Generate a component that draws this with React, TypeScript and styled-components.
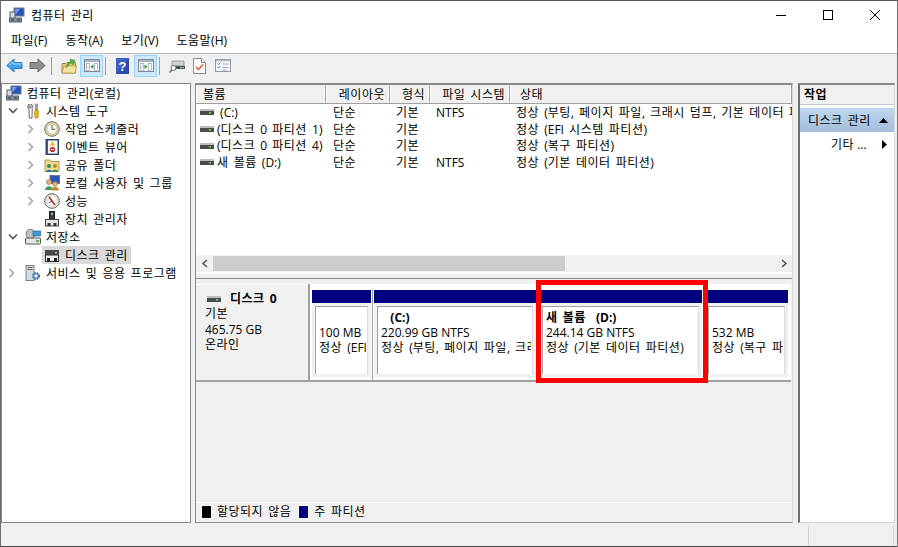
import React from "react";
import styled, { createGlobalStyle } from "styled-components";

const Global = createGlobalStyle`
  html, body { margin: 0; padding: 0; background: #fff; }
  body { font-family: "Open Sans", "Noto Sans CJK KR", sans-serif; font-size: 12px; color: #000; }
  * { box-sizing: border-box; }
`;

const KoRun = styled.span`
  display: inline-block; line-height: 15px; letter-spacing: .5px; word-spacing: 1.5px; white-space: pre;
`;
const K = ({ t }: { t: string }) => {
  if (!/[\uAC00-\uD7A3]/.test(t)) return <>{t}</>;
  return (
    <>
      {t.split(/([\uAC00-\uD7A3 ]+)/).filter(Boolean).map((s, i) =>
        /[\uAC00-\uD7A3 ]/.test(s[0]) ? <KoRun key={i}>{s}</KoRun> : <React.Fragment key={i}>{s}</React.Fragment>
      )}
    </>
  );
};

const Win = styled.div`
  width: 898px; height: 547px; display: flex; flex-direction: column; background: #f0f0f0;
  border-top: 1px solid #5a5a5a; border-left: 1px solid #6e6e6e; border-right: 1px solid #6e6e6e;
  overflow: hidden; position: relative;
`;
const TitleBar = styled.div`
  height: 28px; background: #fff; display: flex; align-items: center; padding-left: 8px; flex: none;
`;
const TitleText = styled.div`
  margin-left: 6px; flex: 1; color: #000;
`;
const WinBtn = styled.div`
  width: 47px; height: 28px; display: flex; align-items: center; justify-content: center; position: relative; left: 1px;
`;
const MenuBar = styled.div`
  height: 25px; background: #fff; display: flex; align-items: center; padding: 0 0 1px 1px; flex: none;
  border-bottom: 1px solid #b9b9c4;
`;
const MenuItem = styled.div`
  padding: 0 9px; white-space: nowrap; display: flex; align-items: center;
`;
const Toolbar = styled.div`
  height: 25px; background: #f0f0f0; display: flex; align-items: center; padding: 0 0 2px 2px; flex: none;
`;
const ToolBtn = styled.div<{ $active?: boolean }>`
  width: 23px; height: 22px; display: flex; align-items: center; justify-content: center; flex: none;
  ${p => p.$active ? "background:#cce8ff;border:1px solid #99d1ff;" : ""}
`;
const Sep = styled.div`
  width: 1px; height: 18px; background: #a0a0a0; margin: 0 5px 0 2px; flex: none;
`;
const Main = styled.div`
  flex: 1; display: flex; min-height: 0; padding: 4px 0 0 0; background: #f0f0f0;
`;
const TreePane = styled.div`
  width: 190px; background: #fff; border: 1px solid #858585; flex: none;
`;
const TreeRow = styled.div<{ $depth: number; $plain?: boolean }>`
  height: 18px; display: flex; align-items: center; padding-left: ${p => p.$plain ? 4 : 2 + p.$depth * 19}px; white-space: nowrap;
`;
const Caret = styled.div`
  width: 21px; flex: none; display: flex; align-items: center; padding-left: 4px;
`;
const TreeIcon = styled.div`
  width: 16px; height: 16px; flex: none; display: flex; margin-right: 5px;
`;
const Selected = styled.div`
  display: flex; align-items: center; height: 18px; background: #d9d9d9; margin-left: -2px; padding: 0 3px 0 2px;
`;
const CenterPane = styled.div`
  width: 598px; margin-left: 4px; flex: none; display: flex; flex-direction: column;
  border-style: solid; border-color: #8a8a8a #d8d8d8 #8a8a8a #8a8a8a; border-width: 2px 1px 1px 1px;
`;
const HeaderRow = styled.div`
  height: 19px; display: flex; background: #f0f0f0; border-bottom: 1px solid #a0a0a0; flex: none;
`;
const HeaderCell = styled.div<{ $w?: number; $right?: boolean }>`
  ${p => p.$w ? `width:${p.$w}px;flex:none;` : "flex:1;"}
  padding: ${p => p.$right ? "0 4px 0 0" : "0 0 0 7px"}; display: flex; align-items: center; white-space: nowrap;
  justify-content: ${p => p.$right ? "flex-end" : "flex-start"};
  border-right: 1px solid #a0a0a0; box-shadow: inset -1px 0 #fff, inset 1px 0 #fff; overflow: hidden;
`;
const StatusHead = styled(HeaderCell)`
  padding-left: 10px;
`;
const ListBody = styled.div`
  background: #fff; height: 151px; flex: none; overflow: hidden;
`;
const ListRow = styled.div`
  display: flex; height: 16.7px; align-items: center; white-space: nowrap;
`;
const Cell = styled.div<{ $w: number; $pad?: number }>`
  width: ${p => p.$w}px; flex: none; padding-left: ${p => p.$pad ?? 0}px; display: flex; align-items: center; overflow: hidden; white-space: pre;
`;
const RowName = styled.span`
  margin-left: 3px;
`;
const ScrollBar = styled.div`
  height: 17px; background: #f0f0f0; display: flex; align-items: center; flex: none;
`;
const ScrollArrow = styled.div`
  width: 17px; height: 17px; display: flex; align-items: center; justify-content: center; flex: none;
`;
const Track = styled.div`
  flex: 1; height: 15px; background: #f0f0f0; display: flex;
`;
const Thumb = styled.div`
  width: 352px; background: #cdcdcd; height: 15px;
`;
const Split = styled.div`
  height: 7px; flex: none; background: #f0f0f0; border-bottom: 1px solid #8a8a8a; box-shadow: inset 0 2px #fff;
`;
const GraphArea = styled.div`
  flex: 1; background: #f0f0f0; display: flex; flex-direction: column; min-height: 0;
`;
const DiskRow = styled.div`
  display: flex; height: 98px; flex: none; margin-top: 5px;
`;
const DiskInfo = styled.div`
  width: 114px; height: 98px; flex: none; background: #f0f0f0; border-right: 2px solid #a0a0a0; border-bottom: 2px solid #a0a0a0;
  padding: 8px 0 0 9px; line-height: 15.5px; box-shadow: inset 0 1px #fff;
`;
const DiskTitle = styled.div`
  display: flex; align-items: center; font-weight: 700; gap: 9px; margin-left: 2px; height: 14px;
`;
const Parts = styled.div`
  width: 481px; flex: none; display: flex; background: #fff; padding: 6px 0 0 2px; height: 98px; border-bottom: 2px solid #a0a0a0;
`;
const Part = styled.div<{ $w: number }>`
  width: ${p => p.$w}px; flex: none; display: flex; flex-direction: column; border-left: 1px solid #a0a0a0; padding-left: 1px; margin-left: 1px;
  &:first-child { border-left: 0; padding-left: 0; margin-left: 0; }
`;
const PartHead = styled.div`
  height: 13px; background: #000080; flex: none;
`;
const PartBody = styled.div`
  height: 74px; background: #f0f0f0; padding: 3px; flex: none;
`;
const PartInner = styled.div`
  height: 68px; background: #fff; border-style: solid; border-color: #a0a0a0 #dcdcdc #dcdcdc #a0a0a0; border-width: 1px 1px 0 1px; padding: 3px 1px 0 3px;
`;
const PartText = styled.div`
  line-height: 15px; height: 60px; overflow: hidden; white-space: pre;
`;
const Bold = styled.div`
  font-weight: 700;
`;
const Empty = styled.div`
  flex: 1; background: #f0f0f0;
`;
const Legend = styled.div`
  height: 20px; flex: none; background: #f0f0f0; border-top: 1px solid #fff; display: flex; align-items: center; padding: 0 0 2px 5px; gap: 5px;
`;
const Swatch = styled.div<{ $c: string }>`
  width: 11px; height: 14px; background: ${p => p.$c}; border: 1px solid #fff;
`;
const LegendText = styled.span`
  margin-right: 2px; display: flex; align-items: center;
`;
const ActionPane = styled.div`
  width: 97px; margin-left: 5px; flex: none; background: #fff; border-style: solid; border-color: #8a8a8a #d8d8d8 #d8d8d8 #6e6e6e; border-width: 2px 1px 1px 2px;
`;
const ActionHead = styled.div`
  height: 20px; display: flex; align-items: center; padding-left: 4px; background: #f0f0f0; font-weight: 700; border-bottom: 1px solid #c8c8c8; margin-bottom: 3px;
`;
const ActionSel = styled.div`
  height: 24px; background: linear-gradient(#bfd7ee, #a3bdda); display: flex; align-items: center; padding: 0 6px 0 8px; justify-content: space-between;
`;
const ActionItem = styled.div`
  height: 24px; display: flex; align-items: center; justify-content: space-between; padding: 0 7px 0 31px;
`;
const StatusBar = styled.div`
  height: 24px; flex: none; background: #f0f0f0; border-bottom: 1px solid #4a4a4a; display: flex; padding-top: 3px;
`;
const StatusCell = styled.div<{ $w: number }>`
  width: ${p => p.$w}px; flex: none; border-right: 1px solid #d0d0d0;
`;
const Highlight = styled.div`
  position: absolute; left: 535px; top: 279px; width: 172px; height: 103px; border: 5px solid #ff0000; pointer-events: none;
`;

const PcIcon = () => (
  <svg width="16" height="16" viewBox="0 0 16 16">
    <rect x="5" y="1" width="10" height="8" fill="#2b55b8" stroke="#6c7690" />
    <path d="M6 2h5l-4 5H6z" fill="#6f9ae8" />
    <rect x="1" y="5" width="5" height="7" fill="#d8dde4" stroke="#55606c" />
    <rect x="0.5" y="11" width="12" height="4" fill="#8a929c" stroke="#55606c" />
    <rect x="2" y="12.5" width="3" height="1" fill="#2a2f38" /><rect x="8" y="12.5" width="3" height="1" fill="#2a2f38" />
  </svg>
);
const ToolsIcon = () => (
  <svg width="16" height="16" viewBox="0 0 16 16">
    <path d="M4 1v3.5L6 5V1.2C8 2 8.5 4 7.2 5.6L7 15H4.2L4 6C2.4 5 2.6 2 4 1z" fill="#fff" stroke="#555" strokeWidth=".9" />
    <rect x="10.5" y="1" width="2.2" height="6" fill="#aaa" stroke="#666" strokeWidth=".5" />
    <path d="M10 7h3l.5 3-.5 5h-3l-.5-5z" fill="#f2b800" stroke="#a57a00" strokeWidth=".6" />
  </svg>
);
const ClockIcon = () => (
  <svg width="16" height="16" viewBox="0 0 16 16">
    <circle cx="8" cy="8" r="7.3" fill="#e8d9a8" stroke="#6b6b5e" />
    <circle cx="8" cy="8" r="5.2" fill="#fbfaf2" stroke="#a89b6e" strokeWidth=".6" />
    <path d="M8 4v4.3h3.3" fill="none" stroke="#555" strokeWidth="1" />
  </svg>
);
const EventIcon = () => (
  <svg width="16" height="16" viewBox="0 0 16 16">
    <rect x="2" y="0.5" width="12.5" height="15" fill="#3c5a90" stroke="#26406e" />
    <rect x="4" y="1.5" width="9.5" height="13" fill="#f7f7f0" />
    <path d="M8.5 2.5l2.5 4H6z" fill="#f0b400" />
    <circle cx="8.5" cy="10.5" r="2.6" fill="#c8202a" />
    <rect x="7" y="10" width="3" height="1" fill="#fff" />
  </svg>
);
const ShareIcon = () => (
  <svg width="16" height="16" viewBox="0 0 16 16">
    <path d="M1 3h5l1 1.5h8v10H1z" fill="#f0d78c" stroke="#b09a50" />
    <circle cx="5" cy="9" r="2" fill="#2f8a48" /><path d="M2 15c0-3 6-3 6 0z" fill="#2f6fa8" />
    <circle cx="11" cy="9" r="2" fill="#b8862a" /><path d="M8 15c0-3 6-3 6 0z" fill="#3a8a4a" />
  </svg>
);
const UsersIcon = () => (
  <svg width="16" height="16" viewBox="0 0 16 16">
    <rect x="6" y="0.5" width="9.5" height="8" fill="#2b55b8" stroke="#6c7690" />
    <circle cx="5" cy="7" r="2.6" fill="#e0b080" stroke="#8a6a3a" strokeWidth=".5" />
    <path d="M1 15c0-5 8-5 8 0z" fill="#3f9a5a" />
    <circle cx="11" cy="9" r="2.4" fill="#e0b080" stroke="#8a6a3a" strokeWidth=".5" />
    <path d="M7 15.5c0-5 8-5 8 0z" fill="#c88a30" />
  </svg>
);
const PerfIcon = () => (
  <svg width="16" height="16" viewBox="0 0 16 16">
    <circle cx="8" cy="8" r="7.3" fill="#f1efe6" stroke="#5f5f5f" />
    <circle cx="8" cy="8" r="5.2" fill="#fff" stroke="#bbb" strokeWidth=".6" />
    <path d="M5 4l6 8" stroke="#d02020" strokeWidth="1.6" />
    <path d="M5 10l3-2" stroke="#444" strokeWidth="1" />
  </svg>
);
const DevIcon = () => (
  <svg width="16" height="16" viewBox="0 0 16 16">
    <rect x="5.5" y="0.5" width="5" height="8" fill="#3c3c3c" stroke="#222" />
    <rect x="7" y="2" width="2" height="2" fill="#7fd07f" />
    <rect x="1.5" y="8.5" width="13" height="6.5" fill="#e4e4e4" stroke="#444" />
    <rect x="3.5" y="12" width="3" height="3" fill="#333" /><rect x="9.5" y="12" width="3" height="3" fill="#333" />
  </svg>
);
const StorageIcon = () => (
  <svg width="16" height="16" viewBox="0 0 16 16">
    <circle cx="5.5" cy="5" r="4.5" fill="#c4c8cc" stroke="#777" />
    <circle cx="5.5" cy="5" r="1.3" fill="#fff" stroke="#777" strokeWidth=".5" />
    <rect x="8" y="2" width="7.5" height="5" fill="#3b9ad8" stroke="#24638e" strokeWidth=".7" />
    <rect x="0.5" y="9" width="15" height="6" rx="1" fill="#e4e6e4" stroke="#555" />
    <rect x="11" y="11" width="3" height="2" fill="#5bb04a" />
  </svg>
);
const DiskIcon = () => (
  <svg width="16" height="16" viewBox="0 0 16 16">
    <rect x="1" y="3" width="14" height="5" fill="#4a4a4a" />
    <rect x="1.5" y="8" width="13" height="6.5" fill="#ececec" stroke="#333" />
    <rect x="3" y="11" width="3" height="4" fill="#222" /><rect x="10" y="11" width="3" height="4" fill="#222" />
    <rect x="11" y="5" width="2" height="1.5" fill="#70e070" />
  </svg>
);
const ServiceIcon = () => (
  <svg width="16" height="16" viewBox="0 0 16 16">
    <rect x="1" y="0.5" width="8" height="15" fill="#d6dbe0" stroke="#7a8088" />
    <rect x="2.5" y="2" width="5" height="1" fill="#666" /><rect x="2.5" y="4" width="5" height="1" fill="#666" />
    <circle cx="11" cy="11" r="3.2" fill="#7fa8d4" stroke="#3a6a9e" strokeWidth="1.6" strokeDasharray="1.6 1" />
    <circle cx="11" cy="11" r="1.2" fill="#fff" />
  </svg>
);
const SmallDisk = () => (
  <svg width="14" height="6" viewBox="0 0 14 6">
    <rect x="0" y="0" width="14" height="2" fill="#bdbdbd" />
    <rect x="0" y="2" width="14" height="4" fill="#4b4b4b" />
    <rect x="9" y="3" width="2" height="1.5" fill="#5fe05f" />
  </svg>
);
const ChevDown = () => (
  <svg width="10" height="8" viewBox="0 0 10 8"><path d="M1 1.5l4 4 4-4" fill="none" stroke="#555" strokeWidth="1.6" /></svg>
);
const ChevRight = () => (
  <svg width="8" height="10" viewBox="0 0 8 10"><path d="M1.5 1l4 4-4 4" fill="none" stroke="#a6a6a6" strokeWidth="1.6" /></svg>
);
const ArrowBack = () => (
  <svg width="17" height="15" viewBox="0 0 17 15">
    <path d="M.8 7.5L8 1v3.5h8v6H8V14z" fill="#3ea0ea" stroke="#2b7cc0" />
    <path d="M3 7.5L7 4v2h8v-1" fill="none" stroke="#a8dcff" />
  </svg>
);
const ArrowFwd = () => (
  <svg width="17" height="15" viewBox="0 0 17 15"><path d="M16.2 7.5L9 1v3.5H1v6h8V14z" fill="#8e8e8e" stroke="#6a6a6a" /></svg>
);
const FolderUp = () => (
  <svg width="16" height="16" viewBox="0 0 16 16">
    <path d="M1 5.5h4l1-1h8.5V15H1z" fill="#f0d27a" stroke="#a68d3e" />
    <path d="M1 15L3 8h12.5L14.5 15z" fill="#f7e29e" stroke="#a68d3e" strokeWidth=".7" />
    <path d="M5 10C6 5 8 3.5 10 3L9 1l5 1.5-2 4.5-1-2C9 5.5 7 7 5 10z" fill="#4fb04f" stroke="#2f7f2f" strokeWidth=".5" />
  </svg>
);
const PaneIcon = ({ arrow }: { arrow: "left" | "right" }) => (
  <svg width="16" height="13" viewBox="0 0 16 13">
    <rect x="0.5" y="0.5" width="15" height="12" fill="#f4f6f8" stroke="#7d8894" />
    <rect x="1" y="1" width="14" height="2" fill="#a9b4c0" />
    <rect x="2.5" y="4.5" width="3" height="7" fill="#fff" stroke="#8d98a4" strokeWidth=".6" />
    <path d="M2.5 8h3M10.5 8h3" stroke="#8d98a4" strokeWidth=".6" />
    <rect x="10.5" y="4.5" width="3" height="7" fill="#fff" stroke="#8d98a4" strokeWidth=".6" />
    <path d={arrow === "left" ? "M9.5 5.5v4.5L6.5 7.7z" : "M6.5 5.5v4.5l3-2.3z"} fill="#2f9a3f" />
  </svg>
);
const HelpIcon = () => (
  <svg width="13" height="16" viewBox="0 0 13 16">
    <rect width="13" height="16" fill="#2a4bb0" />
    <path d="M0 0h13L0 16z" fill="#4a6ccc" opacity=".7" />
    <text x="6.5" y="13" textAnchor="middle" fontSize="13" fontWeight="700" fill="#fff" fontFamily="Liberation Sans">?</text>
  </svg>
);
const ScopeIcon = () => (
  <svg width="16" height="14" viewBox="0 0 16 14">
    <path d="M3 2h12v5H3z" fill="#cdd3d8" stroke="#7c858e" strokeWidth=".7" />
    <rect x="3" y="7" width="13" height="3" fill="#4c4f52" />
    <rect x="11" y="8" width="2" height="1.2" fill="#6fe06f" /><rect x="13.5" y="8" width="1.5" height="1.2" fill="#6fe06f" />
    <circle cx="4.5" cy="9" r="2.5" fill="#fff" stroke="#666" />
    <path d="M3 11l-2.5 2.5" stroke="#777" strokeWidth="1.6" />
  </svg>
);
const CheckDoc = () => (
  <svg width="13" height="16" viewBox="0 0 13 16">
    <path d="M.5.5h8l4 4v11H.5z" fill="#fff" stroke="#8a8a8a" />
    <path d="M8.5.5v4h4" fill="#eee" stroke="#8a8a8a" />
    <path d="M3 9l2.5 2.5L10 6.5" fill="none" stroke="#e2582a" strokeWidth="1.5" />
  </svg>
);
const ListIcon = () => (
  <svg width="16" height="13" viewBox="0 0 16 13">
    <rect x=".5" y=".5" width="15" height="12" fill="#fff" stroke="#8d9aa6" />
    <rect x="1" y="1" width="14" height="1.6" fill="#b9c3cd" />
    <path d="M2.5 4.5l1 1 2-2M2.5 8l1 1 2-2" fill="none" stroke="#2f76c8" strokeWidth="1" />
    <path d="M7 5h7M7 8.5h7M7 11h5" stroke="#9aa3ad" strokeWidth="1" />
  </svg>
);

const tree: { d: number; c?: "d" | "r"; i: React.ReactNode; t: string; sel?: boolean }[] = [
  { d: 0, i: <PcIcon />, t: "컴퓨터 관리(로컬)" },
  { d: 0, c: "d", i: <ToolsIcon />, t: "시스템 도구" },
  { d: 1, c: "r", i: <ClockIcon />, t: "작업 스케줄러" },
  { d: 1, c: "r", i: <EventIcon />, t: "이벤트 뷰어" },
  { d: 1, c: "r", i: <ShareIcon />, t: "공유 폴더" },
  { d: 1, c: "r", i: <UsersIcon />, t: "로컬 사용자 및 그룹" },
  { d: 1, c: "r", i: <PerfIcon />, t: "성능" },
  { d: 1, i: <DevIcon />, t: "장치 관리자" },
  { d: 0, c: "d", i: <StorageIcon />, t: "저장소" },
  { d: 1, i: <DiskIcon />, t: "디스크 관리", sel: true },
  { d: 0, c: "r", i: <ServiceIcon />, t: "서비스 및 응용 프로그램" },
];

const rows = [
  [" (C:)", "단순", "기본", "NTFS", "정상 (부팅, 페이지 파일, 크래시 덤프, 기본 데이터 파티션)"],
  ["(디스크 0 파티션 1)", "단순", "기본", "", "정상 (EFI 시스템 파티션)"],
  ["(디스크 0 파티션 4)", "단순", "기본", "", "정상 (복구 파티션)"],
  ["새 볼륨 (D:)", "단순", "기본", "NTFS", "정상 (기본 데이터 파티션)"],
];

export default function App() {
  return (
    <Win>
      <Global />
      <TitleBar>
        <PcIcon />
        <TitleText><K t="컴퓨터 관리" /></TitleText>
        <WinBtn><svg width="10" height="10" viewBox="0 0 10 10"><path d="M0 5.5h10" stroke="#000" /></svg></WinBtn>
        <WinBtn><svg width="10" height="10" viewBox="0 0 10 10"><rect x=".5" y=".5" width="9" height="9" fill="none" stroke="#000" /></svg></WinBtn>
        <WinBtn><svg width="10" height="10" viewBox="0 0 10 10"><path d="M0 0l10 10M10 0L0 10" stroke="#000" /></svg></WinBtn>
      </TitleBar>
      <MenuBar>
        <MenuItem><K t="파일(F)" /></MenuItem><MenuItem><K t="동작(A)" /></MenuItem><MenuItem><K t="보기(V)" /></MenuItem><MenuItem><K t="도움말(H)" /></MenuItem>
      </MenuBar>
      <Toolbar>
        <ToolBtn><ArrowBack /></ToolBtn>
        <ToolBtn><ArrowFwd /></ToolBtn>
        <Sep />
        <ToolBtn><FolderUp /></ToolBtn>
        <ToolBtn $active><PaneIcon arrow="left" /></ToolBtn>
        <Sep />
        <ToolBtn><HelpIcon /></ToolBtn>
        <ToolBtn $active><PaneIcon arrow="right" /></ToolBtn>
        <Sep />
        <ToolBtn><ScopeIcon /></ToolBtn>
        <ToolBtn><CheckDoc /></ToolBtn>
        <ToolBtn><ListIcon /></ToolBtn>
      </Toolbar>
      <Main>
        <TreePane>
          {tree.map(r => (
            <TreeRow key={r.t} $depth={r.d} $plain={!r.c && r.d === 0}>
              {r.c || r.d === 1 ? <Caret>{r.c === "d" ? <ChevDown /> : r.c === "r" ? <ChevRight /> : null}</Caret> : null}
              {r.sel ? (
                <Selected><TreeIcon>{r.i}</TreeIcon><K t={r.t} /></Selected>
              ) : (
                <><TreeIcon>{r.i}</TreeIcon><K t={r.t} /></>
              )}
            </TreeRow>
          ))}
        </TreePane>
        <CenterPane>
          <HeaderRow>
            <HeaderCell $w={130}><K t="볼륨" /></HeaderCell>
            <HeaderCell $w={64} $right><K t="레이아웃" /></HeaderCell>
            <HeaderCell $w={40} $right><K t="형식" /></HeaderCell>
            <HeaderCell $w={80} $right><K t="파일 시스템" /></HeaderCell>
            <StatusHead><K t="상태" /></StatusHead>
          </HeaderRow>
          <ListBody>
            {rows.map(r => (
              <ListRow key={r[0]}>
                <Cell $w={137} $pad={4}><SmallDisk /><RowName><K t={r[0]} /></RowName></Cell>
                <Cell $w={63}><K t={r[1]} /></Cell>
                <Cell $w={40}><K t={r[2]} /></Cell>
                <Cell $w={80}>{r[3]}</Cell>
                <Cell $w={276}><K t={r[4]} /></Cell>
              </ListRow>
            ))}
          </ListBody>
          <ScrollBar>
            <ScrollArrow><svg width="8" height="9" viewBox="0 0 8 9"><path d="M6 1L2 4.5 6 8" fill="none" stroke="#555" strokeWidth="1.6" /></svg></ScrollArrow>
            <Track><Thumb /></Track>
            <ScrollArrow><svg width="8" height="9" viewBox="0 0 8 9"><path d="M2 1l4 3.5L2 8" fill="none" stroke="#555" strokeWidth="1.6" /></svg></ScrollArrow>
          </ScrollBar>
          <Split />
          <GraphArea>
            <DiskRow>
              <DiskInfo>
                <DiskTitle><SmallDisk /><span><K t="디스크 0" /></span></DiskTitle>
                <div><K t="기본" /></div>
                <div>465.75 GB</div>
                <div><K t="온라인" /></div>
              </DiskInfo>
              <Parts>
                <Part $w={59}>
                  <PartHead />
                  <PartBody><PartInner><PartText>{"\n"}100 MB{"\n"}<K t="정상 (EFI" /></PartText></PartInner></PartBody>
                </Part>
                <Part $w={164}>
                  <PartHead />
                  <PartBody><PartInner><PartText><Bold>   (C:)</Bold>220.99 GB NTFS{"\n"}<K t="정상 (부팅, 페이지 파일, 크래" /></PartText></PartInner></PartBody>
                </Part>
                <Part $w={165}>
                  <PartHead />
                  <PartBody><PartInner><PartText><Bold><K t="새 볼륨  " />(D:)</Bold>244.14 GB NTFS{"\n"}<K t="정상 (기본 데이터 파티션)" /></PartText></PartInner></PartBody>
                </Part>
                <Part $w={85}>
                  <PartHead />
                  <PartBody><PartInner><PartText>{"\n"}532 MB{"\n"}<K t="정상 (복구 파" /></PartText></PartInner></PartBody>
                </Part>
              </Parts>
            </DiskRow>
            <Empty />
            <Legend>
              <Swatch $c="#000" /><LegendText><K t="할당되지 않음" /></LegendText>
              <Swatch $c="#000080" /><LegendText><K t="주 파티션" /></LegendText>
            </Legend>
          </GraphArea>
        </CenterPane>
        <ActionPane>
          <ActionHead><K t="작업" /></ActionHead>
          <ActionSel><span><K t="디스크 관리" /></span><svg width="9" height="5" viewBox="0 0 9 5"><path d="M0 5l4.5-5L9 5z" fill="#000" /></svg></ActionSel>
          <ActionItem><span><K t="기타" /> ...</span><svg width="5" height="9" viewBox="0 0 5 9"><path d="M0 0l5 4.5L0 9z" fill="#000" /></svg></ActionItem>
        </ActionPane>
      </Main>
      <StatusBar>
        <StatusCell $w={808} />
        <StatusCell $w={85} />
      </StatusBar>
      <Highlight />
    </Win>
  );
}
